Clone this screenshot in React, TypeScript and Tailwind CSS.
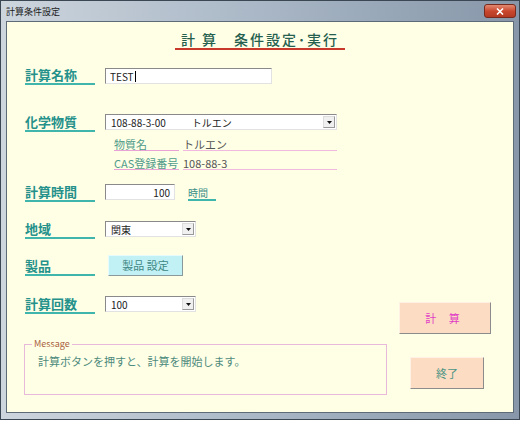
import type { ReactNode } from 'react';

const JP = "font-['Noto_Sans_CJK_JP',sans-serif]";

function Label({ children }: { children: ReactNode }) {
  return (
    <div className="w-[70px] shrink-0 border-b-2 border-[#3fb5ab] text-[13px] leading-[16px] font-bold text-[#25918b]">
      {children}
    </div>
  );
}

function Sunken({ className, children }: { className: string; children?: ReactNode }) {
  return (
    <div
      className={`flex items-center bg-white border border-[#8a8a8a] border-r-[#e2e2e2] border-b-[#e2e2e2] text-[10px] text-[#222] ${className}`}
    >
      {children}
    </div>
  );
}

function Combo({ width, children }: { width: string; children: ReactNode }) {
  return (
    <Sunken className={`ml-[10px] h-[16px] ${width} pl-[5px] pr-[1px]`}>
      <div className="flex flex-1 items-center">{children}</div>
      <div className="flex h-[12px] w-[12px] items-center justify-center bg-[#f0f0f0] border border-[#dcdcdc] border-r-[#9a9a9a] border-b-[#9a9a9a]">
        <svg width="5" height="3" viewBox="0 0 5 3">
          <path d="M0 0h5L2.5 3z" fill="#111" />
        </svg>
      </div>
    </Sunken>
  );
}

function Row({ className = '', children }: { className?: string; children: ReactNode }) {
  return <div className={`flex items-start pl-[18px] ${className}`}>{children}</div>;
}

export default function App() {
  return (
    <div className={`w-[524px] h-[427px] bg-white ${JP}`}>
      <div className="flex h-[420px] w-[520px] flex-col border border-[#3c4754] bg-gradient-to-r from-[#cdd5dd] via-[#a9b7c6] to-[#8797a9]">
        {/* title bar */}
        <div className="flex h-[20px] items-center justify-between pl-[5px] pr-[3px]">
          <span className="text-[9px] leading-none text-[#1b1b1b]">計算条件設定</span>
          <div className="flex h-[14px] w-[32px] items-center justify-center rounded-[3px] border border-[#7a2a1c] bg-gradient-to-b from-[#e28a72] via-[#c9472d] to-[#b43a22]">
            <svg width="8" height="7" viewBox="0 0 8 7">
              <path d="M1 0.5l6 6M7 0.5l-6 6" stroke="#fff" strokeWidth="1.6" />
            </svg>
          </div>
        </div>

        {/* client area */}
        <div className="mx-[5px] mb-[6px] flex flex-1 flex-col border border-[#5d6a78] bg-[#ffffe6]">
          <div className="mt-[9px] self-center border-b-2 border-[#c8392c] px-[6px] pb-[1px] text-[14px] leading-[16px] font-medium tracking-[2px] text-[#25604f]">
            計 算　条件設定･実行
          </div>

          <Row className="mt-[17px]">
            <Label>計算名称</Label>
            <Sunken className="ml-[10px] mt-[1px] h-[16px] w-[167px] pl-[4px]">
              TEST
              <span className="ml-[1px] inline-block h-[11px] w-px bg-black" />
            </Sunken>
          </Row>

          <Row className="mt-[29px]">
            <Label>化学物質</Label>
            <Combo width="w-[232px]">
              <span>108-88-3-00</span>
              <span className="ml-[26px]">トルエン</span>
            </Combo>
          </Row>

          <div className="mt-[6px] flex pl-[107px] text-[11px] leading-[12px]">
            <div className="w-[65px] border-b border-[#e9a2d6] text-[#4f9b8a]">物質名</div>
            <div className="ml-[4px] w-[154px] border-b border-[#f1b8e0] text-[#555]">トルエン</div>
          </div>
          <div className="mt-[6px] flex pl-[107px] text-[11px] leading-[12px]">
            <div className="w-[65px] border-b border-[#e9a2d6] text-[#4f9b8a]">CAS登録番号</div>
            <div className="ml-[4px] w-[154px] border-b border-[#f1b8e0] text-[#555]">108-88-3</div>
          </div>

          <Row className="mt-[14px]">
            <Label>計算時間</Label>
            <Sunken className="ml-[10px] h-[16px] w-[70px] justify-end pr-[4px]">100</Sunken>
            <div className="ml-[13px] mt-[2px] w-[28px] border-b-2 border-[#3fb5ab] text-[10px] leading-[13px] text-[#3a8f86]">
              時間
            </div>
          </Row>

          <Row className="mt-[19px]">
            <Label>地域</Label>
            <Combo width="w-[91px]">関東</Combo>
          </Row>

          <Row className="mt-[16px]">
            <div className="mt-[3px]">
              <Label>製品</Label>
            </div>
            <button className="ml-[13px] flex h-[21px] w-[75px] items-center justify-center border border-[#e8fbfc] border-r-[#8a9a9c] border-b-[#8a9a9c] bg-[#c2f1f5] text-[11px] text-[#3d8784]">
              製品 設定
            </button>
          </Row>

          <div className="mt-[20px] flex">
            <div className="flex w-[381px] flex-col">
              <Row>
                <Label>計算回数</Label>
                <Combo width="w-[91px]">100</Combo>
              </Row>
              <fieldset className="ml-[17px] mt-[25px] h-[56px] w-[363px] border border-[#e8b9da]">
                <legend className="ml-[7px] px-[2px] text-[9px] leading-[10px] text-[#a8603e]">Message</legend>
                <p className="mt-[6px] pl-[13px] text-[11px] leading-[12px] text-[#4d8a7c]">
                  計算ボタンを押すと、計算を開始します。
                </p>
              </fieldset>
            </div>
            <div className="flex flex-col items-start">
              <button className="ml-[11px] mt-[6px] flex h-[32px] w-[92px] items-center justify-center border border-[#fff1e4] border-r-[#8c8c8c] border-b-[#8c8c8c] bg-[#fcdcc2] text-[11px] tracking-[5px] text-[#e03ec6]">
                計 算
              </button>
              <button className="ml-[22px] mt-[23px] flex h-[32px] w-[74px] items-center justify-center border border-[#fff1e4] border-r-[#8c8c8c] border-b-[#8c8c8c] bg-[#fcdcc2] text-[11px] text-[#4c9585]">
                終了
              </button>
            </div>
          </div>
        </div>
      </div>
    </div>
  );
}
